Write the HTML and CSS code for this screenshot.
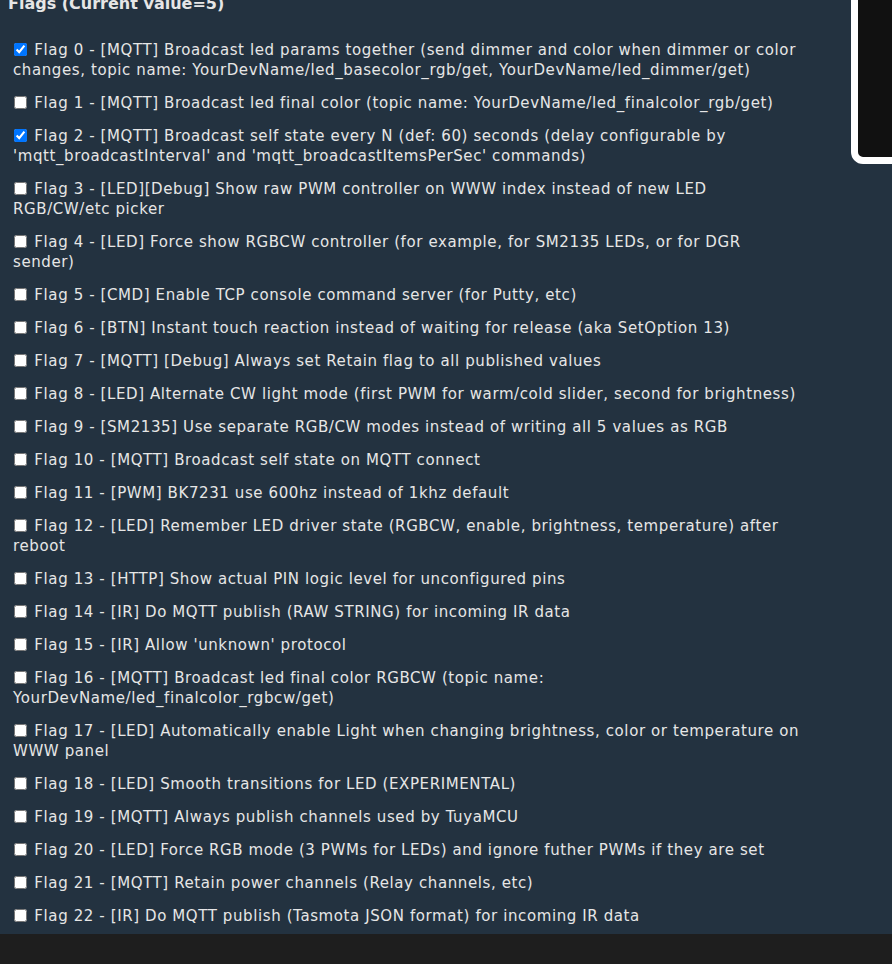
FILE: index.html
```html
<!DOCTYPE html>
<html lang="en">

<head>
  <meta charset="utf-8">
  <title>Flags</title>

  <link rel="stylesheet" href="styles.css">
</head>

<body>
    <div class="panel">
        <h3 class="title">Flags (Current value=5)</h3>

        <div class="flags">
            <div class="flag"><label><input type="checkbox" checked> Flag 0 - [MQTT] Broadcast led params together (send dimmer and color when dimmer or color changes, topic name: YourDevName/led_basecolor_rgb/get, YourDevName/led_dimmer/get)</label></div>
            <div class="flag"><label><input type="checkbox"> Flag 1 - [MQTT] Broadcast led final color (topic name: YourDevName/led_finalcolor_rgb/get)</label></div>
            <div class="flag"><label><input type="checkbox" checked> Flag 2 - [MQTT] Broadcast self state every N (def: 60) seconds (delay configurable by 'mqtt_broadcastInterval' and 'mqtt_broadcastItemsPerSec' commands)</label></div>
            <div class="flag"><label><input type="checkbox"> Flag 3 - [LED][Debug] Show raw PWM controller on WWW index instead of new LED RGB/CW/etc picker</label></div>
            <div class="flag"><label><input type="checkbox"> Flag 4 - [LED] Force show RGBCW controller (for example, for SM2135 LEDs, or for DGR sender)</label></div>
            <div class="flag"><label><input type="checkbox"> Flag 5 - [CMD] Enable TCP console command server (for Putty, etc)</label></div>
            <div class="flag"><label><input type="checkbox"> Flag 6 - [BTN] Instant touch reaction instead of waiting for release (aka SetOption 13)</label></div>
            <div class="flag"><label><input type="checkbox"> Flag 7 - [MQTT] [Debug] Always set Retain flag to all published values</label></div>
            <div class="flag"><label><input type="checkbox"> Flag 8 - [LED] Alternate CW light mode (first PWM for warm/cold slider, second for brightness)</label></div>
            <div class="flag"><label><input type="checkbox"> Flag 9 - [SM2135] Use separate RGB/CW modes instead of writing all 5 values as RGB</label></div>
            <div class="flag"><label><input type="checkbox"> Flag 10 - [MQTT] Broadcast self state on MQTT connect</label></div>
            <div class="flag"><label><input type="checkbox"> Flag 11 - [PWM] BK7231 use 600hz instead of 1khz default</label></div>
            <div class="flag"><label><input type="checkbox"> Flag 12 - [LED] Remember LED driver state (RGBCW, enable, brightness, temperature) after reboot</label></div>
            <div class="flag"><label><input type="checkbox"> Flag 13 - [HTTP] Show actual PIN logic level for unconfigured pins</label></div>
            <div class="flag"><label><input type="checkbox"> Flag 14 - [IR] Do MQTT publish (RAW STRING) for incoming IR data</label></div>
            <div class="flag"><label><input type="checkbox"> Flag 15 - [IR] Allow 'unknown' protocol</label></div>
            <div class="flag"><label><input type="checkbox"> Flag 16 - [MQTT] Broadcast led final color RGBCW (topic name: YourDevName/led_finalcolor_rgbcw/get)</label></div>
            <div class="flag"><label><input type="checkbox"> Flag 17 - [LED] Automatically enable Light when changing brightness, color or temperature on WWW panel</label></div>
            <div class="flag"><label><input type="checkbox"> Flag 18 - [LED] Smooth transitions for LED (EXPERIMENTAL)</label></div>
            <div class="flag"><label><input type="checkbox"> Flag 19 - [MQTT] Always publish channels used by TuyaMCU</label></div>
            <div class="flag"><label><input type="checkbox"> Flag 20 - [LED] Force RGB mode (3 PWMs for LEDs) and ignore futher PWMs if they are set</label></div>
            <div class="flag"><label><input type="checkbox"> Flag 21 - [MQTT] Retain power channels (Relay channels, etc)</label></div>
            <div class="flag"><label><input type="checkbox"> Flag 22 - [IR] Do MQTT publish (Tasmota JSON format) for incoming IR data</label></div>
        </div>
    </div>

    <div class="footer"></div>

    <div class="console"></div>
</body>

</html>
```

FILE: styles.css
```css
body {
	margin: 0px;
	background-color: #1e1e1e;
	font-family: "DejaVu Sans", Verdana, sans-serif;
	color: #e6e6e6;
	overflow: hidden;
}

.panel {
	background-color: #233240;
	padding: 0px 8px 8px 8px;
	margin-top: -14px;
}

.title {
	margin: 0px 0px 26px 0px;
	padding-top: 8px;
	font-size: 16px;
	line-height: 20px;
	font-weight: bold;
}

.flags {
	padding-left: 5px;
	width: 788px;
}

.flag {
	font-size: 15px;
	line-height: 20px;
	letter-spacing: 0.6px;
	margin-bottom: 13px;
}

.flag:last-child {
	margin-bottom: 0px;
}

.flag input {
	width: 13px;
	height: 13px;
	margin: 0px 2px 0px 1px;
	vertical-align: -1px;
}

.footer {
	height: 40px;
}

.console {
	position: fixed;
	top: -20px;
	left: 851px;
	width: 80px;
	height: 170px;
	background-color: #111111;
	border: 7px solid #ffffff;
	border-radius: 12px;
}
```
